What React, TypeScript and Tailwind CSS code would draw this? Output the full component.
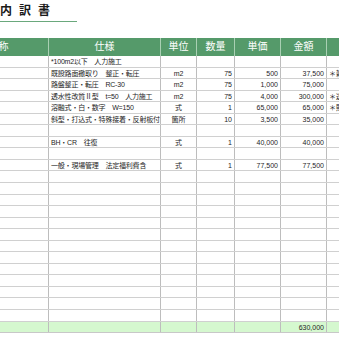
import { FC } from "react";

type Row = {
  spec?: string;
  unit?: string;
  qty?: string;
  price?: string;
  amount?: string;
  note?: string;
};

const rows: Row[] = [
  { spec: "*100m2以下　人力施工" },
  { spec: "既設路面撤取り　整正・転圧", unit: "m2", qty: "75", price: "500", amount: "37,500", note: "＊雑" },
  { spec: "路盤整正・転圧　RC-30", unit: "m2", qty: "75", price: "1,000", amount: "75,000" },
  { spec: "透水性改質Ⅱ型　t=50　人力施工", unit: "m2", qty: "75", price: "4,000", amount: "300,000", note: "＊透" },
  { spec: "溶融式・白・数字　W=150", unit: "式", qty: "1", price: "65,000", amount: "65,000", note: "＊貼" },
  { spec: "斜型・打込式・特殊接着・反射板付", unit: "箇所", qty: "10", price: "3,500", amount: "35,000" },
  {},
  { spec: "BH・CR　往復", unit: "式", qty: "1", price: "40,000", amount: "40,000" },
  {},
  { spec: "一般・現場管理　法定福利費含", unit: "式", qty: "1", price: "77,500", amount: "77,500" },
  ...Array.from({ length: 13 }, () => ({})),
];

const grid = "grid grid-cols-[100px_112px_36px_38px_46px_46px_60px]";
const cell = "border-r border-[#bdbdbd] px-[2px] leading-[10px] whitespace-nowrap overflow-hidden";

const App: FC = () => {
  return (
    <div className="h-[339px] w-[339px] overflow-hidden bg-white font-['Liberation_Sans','Noto_Sans_CJK_JP',sans-serif] text-[#1e1e1e]">
      <div className="-ml-[38px] w-fit pt-[5px]">
        <div className="w-[115px] border-b border-[#6aa87c] pb-[3px] text-[12px] font-bold leading-[13px] tracking-[7px] text-[#1a1a1a]">
          工事内訳書
        </div>
      </div>

      <div className="-ml-[51px] mt-[16px] w-fit">
        <div className={`${grid} h-[18px] bg-[#559a6a] text-[10px] text-white`}>
          {["名称", "仕様", "単位", "数量", "単価", "金額", "備考"].map((h) => (
            <div
              key={h}
              className="flex items-center justify-center border-r border-[#a9d0b3] leading-none"
            >
              {h}
            </div>
          ))}
        </div>

        {rows.map((r, i) => (
          <div
            key={i}
            className={`${grid} h-[11.55px] border-b-[1.5px] border-[#d0d0d0] text-[7px]`}
          >
            <div className={cell} />
            <div className={`${cell} pt-[1px] tracking-[-0.2px]`}>{r.spec}</div>
            <div className={`${cell} pt-[1px] text-center`}>{r.unit}</div>
            <div className={`${cell} pt-[1px] text-right`}>{r.qty}</div>
            <div className={`${cell} pt-[1px] text-right`}>{r.price}</div>
            <div className={`${cell} pt-[1px] text-right`}>{r.amount}</div>
            <div className={`${cell} pt-[1px]`}>{r.note}</div>
          </div>
        ))}

        <div className={`${grid} h-[11.5px] border-b-[1.5px] border-[#c8c8c8] bg-[#d5f8cf] text-[7px]`}>
          <div className={cell} />
          <div className={cell} />
          <div className={cell} />
          <div className={cell} />
          <div className={cell} />
          <div className={`${cell} pt-[1px] text-right`}>630,000</div>
          <div className={cell} />
        </div>
      </div>
    </div>
  );
};

export default App;
